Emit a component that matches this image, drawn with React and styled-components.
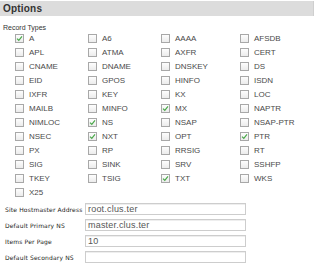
import React from "react";
import styled, { createGlobalStyle } from "styled-components";

const GlobalStyle = createGlobalStyle`
  body {
    margin: 0;
    background: #fff;
    font-family: "Liberation Sans", Arial, sans-serif;
  }
`;

const Page = styled.div`
  width: 314px;
  padding-top: 1px;
`;

const Header = styled.div`
  height: 15px;
  background: #dcdcdc;
  border-right: 1px solid #cfcfcf;
  padding-left: 3px;
  font: bold 10px/15px "Liberation Sans", Arial, sans-serif;
  color: #333;
  letter-spacing: 0.2px;
`;

const SubTitle = styled.div`
  margin: 8px 0 0 3px;
  font-size: 7px;
  line-height: 8px;
  color: #333;
`;

const TypeGrid = styled.div`
  display: grid;
  grid-template-columns: 73px 73px 79px 60px;
  grid-auto-rows: 14px;
  margin: -1px 0 0 15px;
`;

const Item = styled.label`
  display: flex;
  align-items: center;
  gap: 4px;
  font-size: 8px;
  color: #4a4a4a;
`;

const Box = styled.span`
  width: 7px;
  height: 7px;
  border: 1px solid #a8a8a8;
  background: linear-gradient(#fdfdfd, #ececec);
  display: flex;
  align-items: center;
  justify-content: center;
  box-sizing: content-box;
  margin-right: 1px;
`;

const Form = styled.div`
  margin-top: 4px;
  display: flex;
  flex-direction: column;
  gap: 4px;
`;

const Row = styled.div`
  display: flex;
  align-items: center;
  height: 12px;
`;

const FieldLabel = styled.div`
  width: 80px;
  padding-left: 5px;
  font: 6px "DejaVu Sans", Verdana, sans-serif;
  letter-spacing: 0.15px;
  color: #222;
  white-space: nowrap;
`;

const Field = styled.div`
  width: 157px;
  height: 10px;
  border: 1px solid #cdcdcd;
  box-shadow: inset 0 1px 0 #eee;
  padding-left: 2px;
  font-size: 9px;
  line-height: 10px;
  color: #555;
  letter-spacing: 0.2px;
`;

const types = [
  ["A", 1], ["A6"], ["AAAA"], ["AFSDB"],
  ["APL"], ["ATMA"], ["AXFR"], ["CERT"],
  ["CNAME"], ["DNAME"], ["DNSKEY"], ["DS"],
  ["EID"], ["GPOS"], ["HINFO"], ["ISDN"],
  ["IXFR"], ["KEY"], ["KX"], ["LOC"],
  ["MAILB"], ["MINFO"], ["MX", 1], ["NAPTR"],
  ["NIMLOC"], ["NS", 1], ["NSAP"], ["NSAP-PTR"],
  ["NSEC"], ["NXT", 1], ["OPT"], ["PTR", 1],
  ["PX"], ["RP"], ["RRSIG"], ["RT"],
  ["SIG"], ["SINK"], ["SRV"], ["SSHFP"],
  ["TKEY"], ["TSIG"], ["TXT", 1], ["WKS"],
  ["X25"],
];

const fields = [
  ["Site Hostmaster Address", "root.clus.ter"],
  ["Default Primary NS", "master.clus.ter"],
  ["Items Per Page", "10"],
  ["Default Secondary NS", ""],
];

function Check() {
  return (
    <svg width="7" height="7" viewBox="0 0 7 7">
      <path d="M1 3.6 L2.8 5.4 L6 1.4" fill="none" stroke="#4aa84a" strokeWidth="1.2" />
    </svg>
  );
}

export default function App() {
  return (
    <Page>
      <GlobalStyle />
      <Header>Options</Header>
      <SubTitle>Record Types</SubTitle>
      <TypeGrid>
        {types.map(([name, on]) => (
          <Item key={name}>
            <Box>{on && <Check />}</Box>
            {name}
          </Item>
        ))}
      </TypeGrid>
      <Form>
        {fields.map(([label, value]) => (
          <Row key={label}>
            <FieldLabel>{label}</FieldLabel>
            <Field>{value}</Field>
          </Row>
        ))}
      </Form>
    </Page>
  );
}
